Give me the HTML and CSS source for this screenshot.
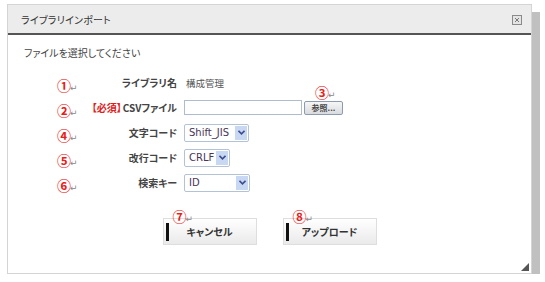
FILE: index.html
```html
<!DOCTYPE html>
<html lang="ja">
<head>
<meta charset="utf-8">
<link rel="stylesheet" href="styles.css">
</head>
<body>
<div class="stage">
  <div class="dialog">
    <div class="header">
      <span class="title">ライブラリインポート</span>
      <span class="close"><svg width="10" height="10" viewBox="0 0 10 10"><rect x="0.5" y="0.5" width="9" height="9" fill="#e4e4e4" stroke="#8a8a8a"/><path d="M3 3 L7 7 M7 3 L3 7" stroke="#777" stroke-width="1"/></svg></span>
    </div>
    <div class="body">
      <p class="msg">ファイルを選択してください</p>
      <div class="form">
        <span class="num">①<i>↵</i></span>
        <span class="label">ライブラリ名</span>
        <span class="value plain">構成管理</span>

        <span class="num">②<i>↵</i></span>
        <span class="label"><em>【必須】</em>CSVファイル</span>
        <span class="value">
          <span class="file"></span>
          <span class="browse">参照...<span class="note note-3">③<i>↵</i></span></span>
        </span>

        <span class="num">④<i>↵</i></span>
        <span class="label">文字コード</span>
        <span class="value"><span class="select w65"><span class="stext">Shift_JIS</span><span class="arrow"><svg width="7" height="5" viewBox="0 0 7 5"><path d="M0.5 0.8 L3.5 3.8 L6.5 0.8" fill="none" stroke="#3b4d8f" stroke-width="1.6"/></svg></span></span></span>

        <span class="num">⑤<i>↵</i></span>
        <span class="label">改行コード</span>
        <span class="value"><span class="select w46"><span class="stext">CRLF</span><span class="arrow"><svg width="7" height="5" viewBox="0 0 7 5"><path d="M0.5 0.8 L3.5 3.8 L6.5 0.8" fill="none" stroke="#3b4d8f" stroke-width="1.6"/></svg></span></span></span>

        <span class="num">⑥<i>↵</i></span>
        <span class="label">検索キー</span>
        <span class="value"><span class="select w66"><span class="stext">ID</span><span class="arrow"><svg width="7" height="5" viewBox="0 0 7 5"><path d="M0.5 0.8 L3.5 3.8 L6.5 0.8" fill="none" stroke="#3b4d8f" stroke-width="1.6"/></svg></span></span></span>
      </div>
      <div class="actions">
        <span class="btn">キャンセル<span class="note note-btn">⑦<i>↵</i></span></span>
        <span class="btn">アップロード<span class="note note-btn">⑧<i>↵</i></span></span>
      </div>
    </div>
    <span class="grip"><svg width="8" height="8" viewBox="0 0 8 8"><path d="M8 0 L8 8 L0 8 Z" fill="#555"/></svg></span>
  </div>
</div>
</body>
</html>
```
FILE: styles.css
```css
html, body {
  margin: 0;
  background: #fff;
}
body {
  font-family: "Noto Sans CJK JP", "DejaVu Sans", sans-serif;
  color: #333;
}
.stage {
  padding: 4px 0 0 7px;
}
.dialog {
  position: relative;
  box-sizing: border-box;
  width: 525px;
  height: 270px;
  border: 1px solid #d4d4d4;
  background: #fff;
  box-shadow: 8px 8px 0 0 #c0c0c0;
}
.header {
  height: 28px;
  background: #ececec;
  border-bottom: 2px solid #555;
  display: flex;
  align-items: center;
  justify-content: space-between;
  padding: 0 9px 0 13px;
}
.title {
  font-size: 10px;
  font-feature-settings: "palt";
  color: #333;
  letter-spacing: 0.2px;
}
.close {
  display: flex;
  margin-top: 1px;
}
.body {
  padding: 11px 0 0 0;
}
.msg {
  margin: 0 0 0 16px;
  font-size: 10px;
  line-height: 14px;
  height: 14px;
  font-feature-settings: "palt";
  color: #444;
}
.form {
  margin-top: 10px;
  padding-left: 49px;
  display: grid;
  grid-template-columns: 24px 96px auto;
  grid-auto-rows: 25px;
  align-items: center;
}
.num, .note {
  font-family: "Noto Sans CJK JP", sans-serif;
  font-size: 14px;
  font-weight: bold;
  line-height: 14px;
  color: #e8201a;
  white-space: nowrap;
}
.num {
  position: relative;
  top: 4px;
}
.num i, .note i {
  font-family: "DejaVu Sans", sans-serif;
  font-style: normal;
  font-weight: normal;
  font-size: 9px;
  color: #888;
  margin-left: -1px;
}
.label {
  justify-self: end;
  white-space: nowrap;
  font-size: 10px;
  font-weight: bold;
  color: #444;
  font-feature-settings: "palt";
}
.label em {
  font-style: normal;
  color: #e0201a;
  margin-right: 1px;
}
.value {
  display: flex;
  align-items: center;
  gap: 2px;
  padding-left: 7px;
}
.value.plain {
  font-size: 9.5px;
  color: #555;
  padding-left: 9px;
}
.file {
  box-sizing: border-box;
  width: 118px;
  height: 15px;
  border: 1px solid #aebccd;
  background: #fff;
}
.browse {
  position: relative;
  box-sizing: border-box;
  width: 39px;
  height: 14px;
  border: 1px solid #8d9bb0;
  border-radius: 2px;
  background: linear-gradient(#f6f6f6, #d9dbdf);
  font-size: 8px;
  line-height: 12px;
  color: #444;
  text-align: center;
  font-weight: bold;
}
.note {
  position: absolute;
}
.note-3 {
  left: 10px;
  top: -17px;
}
.select {
  box-sizing: border-box;
  height: 18px;
  border: 1px solid #b4c2d6;
  border-radius: 2px;
  background: #fff;
  display: flex;
  align-items: center;
  justify-content: space-between;
  padding: 1px;
}
.w65 { width: 65px; }
.w46 { width: 46px; }
.w66 { width: 66px; }
.stext {
  font-family: "DejaVu Sans", sans-serif;
  font-size: 10px;
  color: #4a3558;
  padding-left: 3px;
}
.arrow {
  width: 12px;
  height: 14px;
  background: #c9d8f2;
  display: flex;
  align-items: center;
  justify-content: center;
}
.actions {
  margin-top: 23px;
  display: flex;
  justify-content: center;
  gap: 26px;
}
.btn {
  position: relative;
  box-sizing: border-box;
  width: 94px;
  height: 27px;
  border: 1px solid #dedede;
  background: linear-gradient(#ffffff, #eaeaea);
  font-size: 10px;
  font-weight: bold;
  color: #333;
  display: flex;
  align-items: center;
  justify-content: center;
  font-feature-settings: "palt";
}
.btn::before {
  content: "";
  position: absolute;
  left: 2px;
  top: 4px;
  width: 3px;
  height: 18px;
  background: #111;
}
.note-btn {
  left: 9px;
  top: -10px;
}
.grip {
  position: absolute;
  right: 2px;
  bottom: 2px;
  display: flex;
}
```
